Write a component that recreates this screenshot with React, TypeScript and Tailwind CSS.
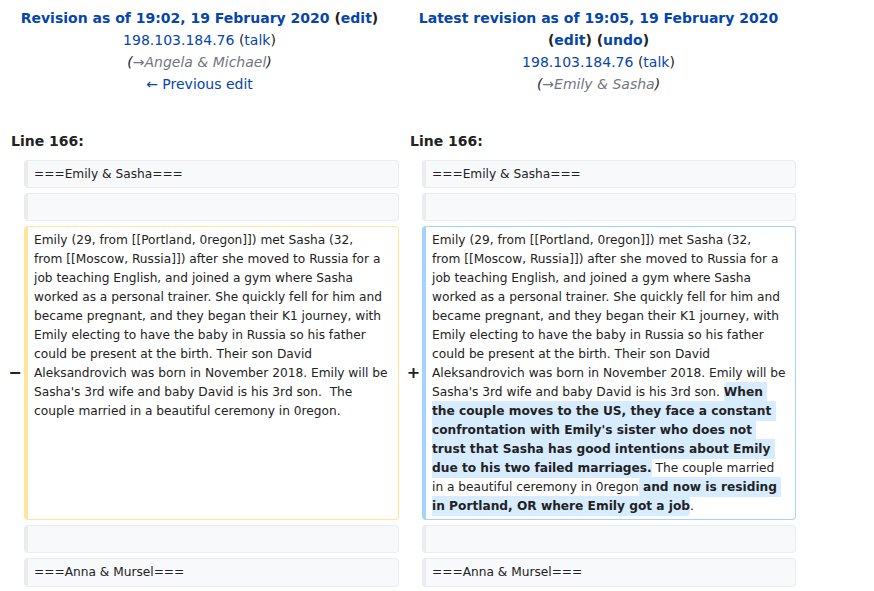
import React from "react";

const link = "text-[#0645ad]";

const Comment = ({ text }: { text: string }) => (
  <span className="italic text-[#222]">
    (<span className="text-[#72777d]">→{text}</span>)
  </span>
);

const Box = ({
  kind = "context",
  children,
}: {
  kind?: "context" | "deleted" | "added";
  children?: React.ReactNode;
}) => {
  const tone =
    kind === "deleted"
      ? "border-[#ffe49c] bg-white"
      : kind === "added"
      ? "border-[#a3d3ff] bg-white"
      : "border-[#eaecf0] bg-[#f8f9fa]";
  return (
    <div
      className={`min-h-[28px] rounded-[4px] border border-l-4 ${tone} pl-[6px] pr-[6px] py-[3.6px] text-[12.2px] leading-[19px] text-[#222] whitespace-pre-wrap`}
    >
      {children}
    </div>
  );
};

const Marker = ({ sign }: { sign?: string }) => (
  <div className="flex items-center justify-center pl-[6px] text-[16px] font-bold text-[#222]">
    {sign}
  </div>
);

const Change = ({ children }: { children: React.ReactNode }) => (
  <span className="rounded-[4px] bg-[#d8ecff] py-[3px] font-bold">{children}</span>
);

// the first line ends after "(32," in the reference
const body =
  "Emily (29, from [[Portland, 0regon]]) met Sasha (32,\nfrom [[Moscow, Russia]]) after she moved to Russia for a job teaching English, and joined a gym where Sasha worked as a personal trainer. She quickly fell for him and became pregnant, and they began their K1 journey, with Emily electing to have the baby in Russia so his father could be present at the birth. Their son David Aleksandrovich was born in November 2018. Emily will be Sasha's 3rd wife and baby David is his 3rd son.";

export default function App() {
  return (
    <div className="w-[874px] bg-white font-['DejaVu_Sans',sans-serif] text-[14px] text-[#222]">
      <div className="grid w-[798px] grid-cols-2 pt-[7px] text-center leading-[22px]">
        <div className="px-[6px]">
          <div className="font-bold">
            <a className={link}>Revision as of 19:02, 19 February 2020</a> (<a className={link}>edit</a>)
          </div>
          <div>
            <a className={link}>198.103.184.76</a> (<a className={link}>talk</a>)
          </div>
          <div>
            <Comment text="Angela & Michael" />
          </div>
          <div>
            <a className={link}>← Previous edit</a>
          </div>
        </div>
        <div className="px-[6px]">
          <div className="font-bold">
            <a className={link}>Latest revision as of 19:05, 19 February 2020</a> (<a className={link}>edit</a>) (
            <a className={link}>undo</a>)
          </div>
          <div>
            <a className={link}>198.103.184.76</a> (<a className={link}>talk</a>)
          </div>
          <div>
            <Comment text="Emily & Sasha" />
          </div>
        </div>
      </div>

      <div className="mt-[35px] grid w-[798px] grid-cols-2 font-bold leading-[22px]">
        <div className="pl-[11px]">Line 166:</div>
        <div className="pl-[11px]">Line 166:</div>
      </div>

      <div className="mt-[8px] grid grid-cols-[24px_375px_23px_374px] gap-y-[5px]">
        <Marker />
        <Box>===Emily &amp; Sasha===</Box>
        <Marker />
        <Box>===Emily &amp; Sasha===</Box>

        <Marker />
        <Box />
        <Marker />
        <Box />

        <Marker sign="−" />
        <Box kind="deleted">
          {body}
          {"  The couple married in a beautiful ceremony in 0regon."}
        </Box>
        <Marker sign="+" />
        <Box kind="added">
          {body}{" "}
          <Change>
            When the couple moves to the US, they face a constant confrontation with Emily's sister who does not
            trust that Sasha has good intentions about Emily due to his two failed marriages.
          </Change>
          {" The couple married in a beautiful ceremony in 0regon"}
          <Change> and now is residing in Portland, OR where Emily got a job</Change>.
        </Box>

        <Marker />
        <Box />
        <Marker />
        <Box />

        <Marker />
        <Box>===Anna &amp; Mursel===</Box>
        <Marker />
        <Box>===Anna &amp; Mursel===</Box>
      </div>
    </div>
  );
}
